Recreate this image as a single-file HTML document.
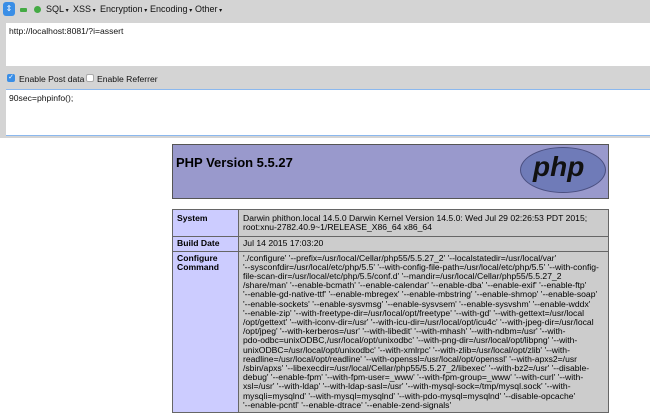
<!DOCTYPE html>
<html><head><meta charset="utf-8"><style>
*{margin:0;padding:0;box-sizing:border-box}
body{width:650px;height:410px;overflow:hidden;background:#fff;font-family:"Liberation Sans",Arial,sans-serif;position:relative}
.a{position:absolute}
.tb{left:0;top:0;width:650px;height:138px;background:#d4d4d4}
.menu{top:4px;font-size:9px;color:#111}
.ta{background:#fff;left:6px;width:644px}
.t{font-size:8.6px;color:#111;white-space:nowrap}
.hdr{left:172px;top:144px;width:437px;height:55px;background:#9999cc;border:1px solid #555}
table{position:absolute;left:172px;top:209px;width:437px;border-collapse:collapse;font-size:8.6px}
td{border:1px solid #666;vertical-align:top;padding:2px 4px;line-height:9.2px;color:#000}
td.e{background:#ccccff;font-weight:bold;width:66px}
td.v{background:#cccccc;white-space:nowrap}
</style></head><body>
<div class="a tb"></div>
<div class="a" style="left:3px;top:2px;width:12px;height:14px;background:#3a8ee6;border-radius:3px;color:#fff;font-size:8px;text-align:center;line-height:14px">⇕</div>
<div class="a" style="left:20px;top:8px;width:7px;height:4px;background:#4a4;border-radius:1px"></div>
<div class="a" style="left:34px;top:6px;width:7px;height:7px;background:#4a4;border-radius:50%"></div>
<div class="a menu" style="left:46px">SQL<span style="font-size:6px"> ▾</span></div>
<div class="a menu" style="left:73px">XSS<span style="font-size:6px"> ▾</span></div>
<div class="a menu" style="left:100px">Encryption<span style="font-size:6px"> ▾</span></div>
<div class="a menu" style="left:150px">Encoding<span style="font-size:6px"> ▾</span></div>
<div class="a menu" style="left:195px">Other<span style="font-size:6px"> ▾</span></div>
<div class="a ta" style="top:23px;height:43px"></div>
<div class="a t" style="left:9px;top:26px">http://localhost:8081/?i=assert</div>
<div class="a" style="left:7px;top:74px;width:8px;height:8px;background:#3a8ee6;border-radius:2px;color:#fff;font-size:7px;line-height:8px;text-align:center">✓</div>
<div class="a t" style="left:19px;top:74px">Enable Post data</div>
<div class="a" style="left:86px;top:74px;width:8px;height:8px;background:#fff;border:1px solid #aaa;border-radius:2px"></div>
<div class="a t" style="left:97px;top:74px">Enable Referrer</div>
<div class="a ta" style="top:89px;height:47px;border-top:1px solid #8bb8ee;border-bottom:1px solid #8bb8ee"></div>
<div class="a t" style="left:9px;top:93px">90sec=phpinfo();</div>
<div class="a hdr"></div>
<div class="a" style="left:176px;top:155px;font-size:13px;font-weight:bold;color:#000">PHP Version 5.5.27</div>
<div class="a" style="left:520px;top:147px;width:86px;height:46px;border-radius:50%;background:#6f7bb8;border:1px solid #4a4f80"></div>
<div class="a" style="left:533px;top:151px;font-size:28px;font-style:italic;font-weight:bold;color:#111;font-family:'Liberation Sans',sans-serif">php</div>
<table>
<tr><td class="e" style="padding-top:4px">System</td><td class="v" style="padding-top:4px;padding-bottom:4px">Darwin phithon.local 14.5.0 Darwin Kernel Version 14.5.0: Wed Jul 29 02:26:53 PDT 2015;<br>root:xnu-2782.40.9~1/RELEASE_X86_64 x86_64</td></tr>
<tr><td class="e">Build Date</td><td class="v">Jul 14 2015 17:03:20</td></tr>
<tr><td class="e">Configure Command</td><td class="v">'./configure' '--prefix=/usr/local/Cellar/php55/5.5.27_2' '--localstatedir=/usr/local/var'<br>'--sysconfdir=/usr/local/etc/php/5.5' '--with-config-file-path=/usr/local/etc/php/5.5' '--with-config-<br>file-scan-dir=/usr/local/etc/php/5.5/conf.d' '--mandir=/usr/local/Cellar/php55/5.5.27_2<br>/share/man' '--enable-bcmath' '--enable-calendar' '--enable-dba' '--enable-exif' '--enable-ftp'<br>'--enable-gd-native-ttf' '--enable-mbregex' '--enable-mbstring' '--enable-shmop' '--enable-soap'<br>'--enable-sockets' '--enable-sysvmsg' '--enable-sysvsem' '--enable-sysvshm' '--enable-wddx'<br>'--enable-zip' '--with-freetype-dir=/usr/local/opt/freetype' '--with-gd' '--with-gettext=/usr/local<br>/opt/gettext' '--with-iconv-dir=/usr' '--with-icu-dir=/usr/local/opt/icu4c' '--with-jpeg-dir=/usr/local<br>/opt/jpeg' '--with-kerberos=/usr' '--with-libedit' '--with-mhash' '--with-ndbm=/usr' '--with-<br>pdo-odbc=unixODBC,/usr/local/opt/unixodbc' '--with-png-dir=/usr/local/opt/libpng' '--with-<br>unixODBC=/usr/local/opt/unixodbc' '--with-xmlrpc' '--with-zlib=/usr/local/opt/zlib' '--with-<br>readline=/usr/local/opt/readline' '--with-openssl=/usr/local/opt/openssl' '--with-apxs2=/usr<br>/sbin/apxs' '--libexecdir=/usr/local/Cellar/php55/5.5.27_2/libexec' '--with-bz2=/usr' '--disable-<br>debug' '--enable-fpm' '--with-fpm-user=_www' '--with-fpm-group=_www' '--with-curl' '--with-<br>xsl=/usr' '--with-ldap' '--with-ldap-sasl=/usr' '--with-mysql-sock=/tmp/mysql.sock' '--with-<br>mysqli=mysqlnd' '--with-mysql=mysqlnd' '--with-pdo-mysql=mysqlnd' '--disable-opcache'<br>'--enable-pcntl' '--enable-dtrace' '--enable-zend-signals'</td></tr>
</table>
</body></html>
